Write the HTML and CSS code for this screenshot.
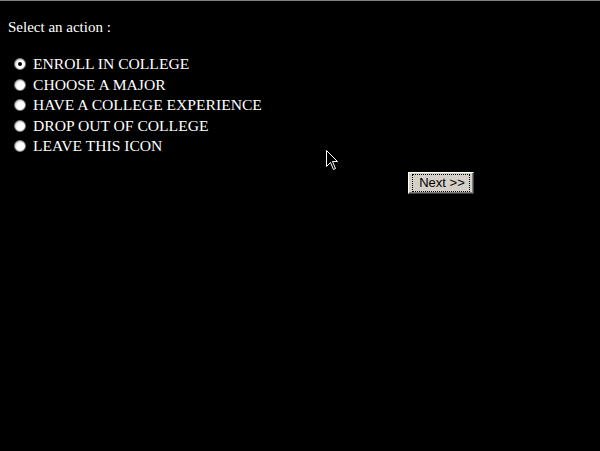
FILE: index.html
```html
<!DOCTYPE html>
<html>
<head>
<meta charset="utf-8">
<link rel="stylesheet" href="styles.css">
</head>
<body>
<div class="page">
  <p class="prompt">Select an action :</p>
  <ul class="options">
    <li class="option"><span class="radio checked"></span><span class="label">ENROLL IN COLLEGE</span></li>
    <li class="option"><span class="radio"></span><span class="label">CHOOSE A MAJOR</span></li>
    <li class="option"><span class="radio"></span><span class="label">HAVE A COLLEGE EXPERIENCE</span></li>
    <li class="option"><span class="radio"></span><span class="label">DROP OUT OF COLLEGE</span></li>
    <li class="option"><span class="radio"></span><span class="label">LEAVE THIS ICON</span></li>
  </ul>
  <div class="actions">
    <button class="next"><span class="focus">Next &gt;&gt;</span></button>
  </div>
</div>
<svg class="cursor" width="12" height="20" viewBox="0 0 12 20">
  <path d="M0.5 0.5 L0.5 16.5 L4.5 12.5 L7.5 19.5 L9.5 18.5 L6.5 11.5 L11.5 11.5 Z" fill="#000" stroke="#fff" stroke-width="1"/>
</svg>
</body>
</html>
```
FILE: styles.css
```css
html, body {
  margin: 0;
  padding: 0;
  background: #000;
}
body {
  width: 600px;
  height: 451px;
  overflow: hidden;
  position: relative;
  font-family: "Liberation Serif", "Times New Roman", serif;
  color: #fff;
}
.page {
  border-top: 1px solid #808080;
  height: 450px;
  padding: 0 8px;
}
.prompt {
  margin: 0;
  padding-top: 17px;
  font-size: 15px;
  line-height: 19px;
}
.options {
  list-style: none;
  margin: 17px 0 0 0;
  padding: 0 0 0 6px;
}
.option {
  display: flex;
  align-items: center;
  height: 20.5px;
  font-size: 15.6px;
}
.radio {
  width: 12px;
  height: 12px;
  border-radius: 50%;
  box-sizing: border-box;
  background: radial-gradient(circle at 60% 60%, #fff 0 45%, #d4d0c8 75%);
  border: 1px solid #808080;
  margin-right: 7px;
  position: relative;
  flex: none;
}
.radio.checked::after {
  content: "";
  position: absolute;
  left: 3px;
  top: 3px;
  width: 4px;
  height: 4px;
  border-radius: 50%;
  background: #000;
}
.label {
  white-space: nowrap;
}
.actions {
  display: flex;
  padding-left: 400px;
  margin-top: 15px;
}
.next {
  width: 66px;
  height: 22px;
  padding: 0;
  background: #d4d0c8;
  border: 1px solid;
  border-color: #fff #404040 #404040 #fff;
  box-shadow: inset -1px -1px 0 #808080;
  font-family: "Liberation Sans", Arial, sans-serif;
  font-size: 13px;
  color: #000;
  display: flex;
  align-items: center;
  justify-content: center;
}
.focus {
  border: 1px dotted #000;
  padding: 1px 4px 1px 6px;
  line-height: 14px;
}
.cursor {
  position: absolute;
  left: 326px;
  top: 150px;
}
```
